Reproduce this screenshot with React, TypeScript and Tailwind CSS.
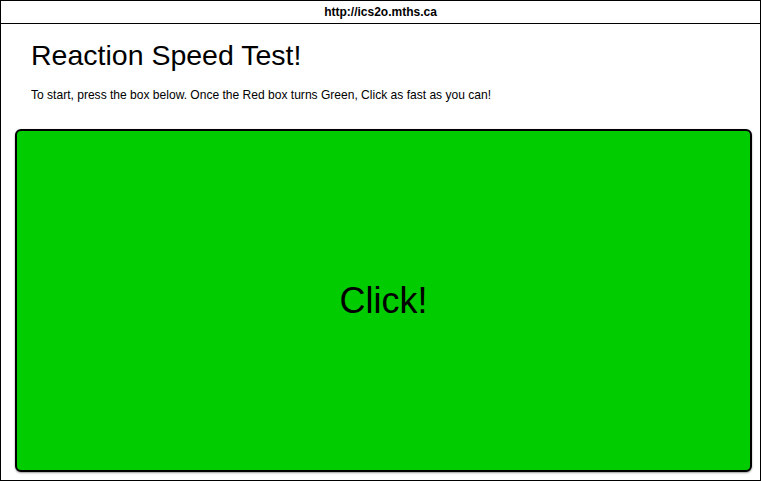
export default function App() {
  return (
    <div className="flex h-[482px] w-[761px] flex-col bg-white font-['Liberation_Sans',Arial,sans-serif] text-black">
      <div className="flex h-[481px] flex-col border border-black">
        {/* address bar */}
        <div className="flex h-[23px] shrink-0 items-center justify-center border-b border-black text-[12px] font-bold">
          http://ics2o.mths.ca
        </div>

        {/* page */}
        <div className="flex flex-1 flex-col pb-[8px] pl-[14px] pr-[8px]">
          <h1 className="mt-[15px] pl-[16px] text-[28.5px] leading-[32px]">Reaction Speed Test!</h1>
          <p className="mt-[17px] pl-[16px] text-[12.05px] leading-[14px]">
            To start, press the box below. Once the Red box turns Green, Click as fast as you can!
          </p>
          <button
            type="button"
            className="mt-[27px] flex flex-1 items-center justify-center rounded-[6px] border-2 border-black bg-[#00cc00] text-[36px] shadow-[0_1px_2px_rgba(0,0,0,0.4)]"
          >
            Click!
          </button>
        </div>
      </div>
    </div>
  );
}
